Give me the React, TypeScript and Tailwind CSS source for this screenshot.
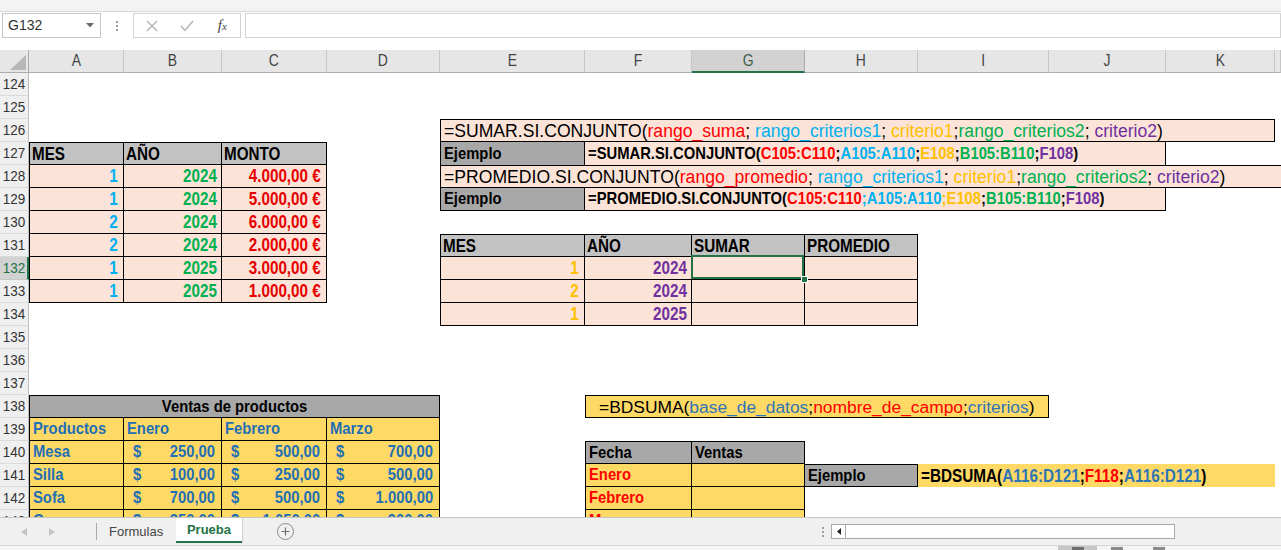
import React from "react";

const GRID =
  "grid grid-cols-[29px_95px_98px_105px_113px_145px_107px_113px_113px_131px_117px_109px_1fr]";
const ARIAL = "font-['Liberation_Sans',Arial,sans-serif]";

const K = "text-black";
const R = "text-[#ff0000]";
const CY = "text-[#00b0f0]";
const Y = "text-[#ffc000]";
const G = "text-[#00b050]";
const P = "text-[#7030a0]";
const B = "text-[#2e75b6]";

type Seg = [string, string];

function Segs({ segs }: { segs: Seg[] }) {
  return (
    <>
      {segs.map(([t, c], i) => (
        <span key={i} className={c}>
          {t}
        </span>
      ))}
    </>
  );
}

/* narrow text: Arial glyphs squeezed like Arial Narrow / Calibri */
function N({ o = "l", children }: { o?: "l" | "r" | "c"; children?: React.ReactNode }) {
  const cls = o === "r" ? "origin-right" : o === "c" ? "origin-center" : "origin-left";
  return <span className={`inline-block scale-x-[0.87] ${cls}`}>{children}</span>;
}

function Cell({
  p,
  cls,
  children,
}: {
  p: string;
  cls?: string;
  children?: React.ReactNode;
}) {
  return (
    <div
      className={`row-start-1 ${p} flex items-center whitespace-nowrap min-w-0 ${cls ?? ""}`}
    >
      {children}
    </div>
  );
}

function RowHead({ n, sel }: { n: number; sel?: boolean }) {
  return sel ? (
    <div className="row-start-1 col-start-1 flex items-center justify-center bg-[#d2d2d2] text-[#217346] border-b border-b-[#c8c8c8] border-r-2 border-r-[#217346] text-[15.5px] font-normal">
      <N o="c">{n}</N>
    </div>
  ) : (
    <div className="row-start-1 col-start-1 flex items-center justify-center bg-[#efefef] text-[#333] border-b border-b-[#dadada] border-r border-r-[#bdbdbd] text-[15.5px] font-normal">
      <N o="c">{n}</N>
    </div>
  );
}

function Row({
  n,
  sel,
  children,
}: {
  n: number;
  sel?: boolean;
  children?: React.ReactNode;
}) {
  return (
    <div className={`${GRID} h-[23px] shrink-0`}>
      <RowHead n={n} sel={sel} />
      {children}
    </div>
  );
}

function Money({ v }: { v: string }) {
  return (
    <div className="flex w-full justify-between pl-[9px] pr-[6px]">
      <N>$</N>
      <N o="r">{v}</N>
    </div>
  );
}

const PEACH = "bg-[#fbe4d7]";
const GOLD = "bg-[#ffd966]";
const HGRAY = "bg-[#c2c2c2]";
const DGRAY = "bg-[#a8a8a8]";

function T1Row({ n, m, a, v, sel, children }: { n: number; m: string; a: string; v: string; sel?: boolean; children?: React.ReactNode }) {
  return (
    <Row n={n} sel={sel}>
      <Cell p="col-start-2" cls={`${PEACH} border-l border-r border-b border-black justify-end pr-[5px] font-bold text-[17.5px] ${CY}`}>
        <N o="r">{m}</N>
      </Cell>
      <Cell p="col-start-3" cls={`${PEACH} border-r border-b border-black justify-end pr-[4px] font-bold text-[17.5px] ${G}`}>
        <N o="r">{a}</N>
      </Cell>
      <Cell p="col-start-4" cls={`${PEACH} border-r border-b border-black justify-end pr-[5px] font-bold text-[17.5px] text-[#e60000]`}>
        <N o="r">{v}</N>
      </Cell>
      {children}
    </Row>
  );
}

function T2Cells({ m, a, sel }: { m: string; a: string; sel?: boolean }) {
  return (
    <>
      <Cell p="col-start-6" cls={`${PEACH} border-l border-r border-b border-black justify-end pr-[5px] font-bold text-[17.5px] ${Y}`}>
        <N o="r">{m}</N>
      </Cell>
      <Cell p="col-start-7" cls={`${PEACH} border-r border-b border-black justify-end pr-[4px] font-bold text-[17.5px] ${P}`}>
        <N o="r">{a}</N>
      </Cell>
      <Cell p="col-start-8" cls={`${PEACH} border-r border-b border-black relative`}>
        {sel && (
          <>
            <div className="absolute z-10 left-[-1px] top-[-2px] w-[calc(100%+1px)] h-[calc(100%+2px)] border-2 border-[#217346]" />
            <div className="absolute z-10 right-[-4px] bottom-[-4px] w-[7px] h-[7px] bg-[#217346] border border-white" />
          </>
        )}
      </Cell>
      <Cell p="col-start-9" cls={`${PEACH} border-r border-b border-black`} />
    </>
  );
}

const VB = "text-[#1f6fb5]";

function VRow({ n, name, e, f, m, children }: { n: number; name: string; e: string; f: string; m: string; children?: React.ReactNode }) {
  return (
    <Row n={n}>
      <Cell p="col-start-2" cls={`${GOLD} border-l border-r border-b border-black font-bold ${VB} pl-[3px]`}>
        <N>{name}</N>
      </Cell>
      <Cell p="col-start-3" cls={`${GOLD} border-r border-b border-black font-bold ${VB}`}>
        <Money v={e} />
      </Cell>
      <Cell p="col-start-4" cls={`${GOLD} border-r border-b border-black font-bold ${VB}`}>
        <Money v={f} />
      </Cell>
      <Cell p="col-start-5" cls={`${GOLD} border-r border-b border-black font-bold ${VB}`}>
        <Money v={m} />
      </Cell>
      {children}
    </Row>
  );
}

function FechaCells({ label }: { label: string }) {
  return (
    <>
      <Cell p="col-start-7" cls={`${GOLD} border-l border-r border-b border-black font-bold text-[#ff0000] pl-[3px]`}>
        <N>{label}</N>
      </Cell>
      <Cell p="col-start-8" cls={`${GOLD} border-r border-b border-black`} />
    </>
  );
}

function FormulaBar() {
  return (
    <div className="h-[50px] shrink-0 bg-white flex flex-col">
      <div className="h-[12px] bg-[#f3f3f3] border-b border-[#d9d9d9]" />
      <div className={`flex items-start pt-[1px] ${ARIAL}`}>
        <div className="ml-[2px] w-[99px] h-[25px] border border-[#c6c6c6] bg-white flex items-center justify-between pl-[5px] pr-[6px] text-[14px] text-[#333]">
          <span>G132</span>
          <svg width="8" height="5" viewBox="0 0 8 5">
            <polygon points="0,0 8,0 4,4.5" fill="#6b6b6b" />
          </svg>
        </div>
        <div className="w-[32px] h-[25px] flex flex-col items-center justify-center gap-[2px]">
          <span className="w-[2px] h-[2px] bg-[#9a9a9a]" />
          <span className="w-[2px] h-[2px] bg-[#9a9a9a]" />
          <span className="w-[2px] h-[2px] bg-[#9a9a9a]" />
        </div>
        <div className="w-[108px] h-[25px] border border-[#d4d4d4] bg-white flex items-center">
          <div className="w-[36px] flex justify-center">
            <svg width="12" height="12" viewBox="0 0 12 12">
              <path d="M1 1 L11 11 M11 1 L1 11" stroke="#b3b3b3" strokeWidth="1.3" />
            </svg>
          </div>
          <div className="w-[36px] flex justify-center">
            <svg width="14" height="12" viewBox="0 0 14 12">
              <path d="M1 6 L5 10.5 L13 1" stroke="#b3b3b3" strokeWidth="1.4" fill="none" />
            </svg>
          </div>
          <div className="w-[36px] flex justify-center font-['Liberation_Serif',serif] italic text-[15px] text-[#444]">
            <span>
              f<span className="text-[11px]">x</span>
            </span>
          </div>
        </div>
        <div className="ml-[4px] flex-1 h-[25px] border border-[#d4d4d4] bg-white" />
      </div>
    </div>
  );
}

function ColHeader() {
  const letters: [string, string][] = [
    ["A", "col-start-2"],
    ["B", "col-start-3"],
    ["C", "col-start-4"],
    ["D", "col-start-5"],
    ["E", "col-start-6"],
    ["F", "col-start-7"],
    ["G", "col-start-8"],
    ["H", "col-start-9"],
    ["I", "col-start-10"],
    ["J", "col-start-11"],
    ["K", "col-start-12"],
    ["", "col-start-13"],
  ];
  return (
    <div className={`${GRID} h-[23px] shrink-0 bg-[#e6e6e6] ${ARIAL} text-[16px] leading-[20px]`}>
      <div className="row-start-1 col-start-1 border-r border-b border-[#ababab] relative">
        <svg className="absolute left-0 top-0" width="29" height="23" viewBox="0 0 29 23">
          <polygon points="10,20 26,20 26,5" fill="#b7b7b7" />
        </svg>
      </div>
      {letters.map(([l, p]) =>
        l === "G" ? (
          <div key={l} className={`row-start-1 ${p} flex items-center justify-center bg-[#d2d2d2] text-[#3d5c4a] border-r border-r-[#ababab] border-b-2 border-b-[#217346]`}>
            <N o="c">{l}</N>
          </div>
        ) : (
          <div key={l + p} className={`row-start-1 ${p} flex items-center justify-center text-[#444] border-r border-r-[#c6c6c6] border-b border-b-[#ababab]`}>
            <N o="c">{l}</N>
          </div>
        )
      )}
    </div>
  );
}

const FORM = "font-normal text-[17.6px] pl-[3px]";

function Sheet() {
  return (
    <div className={`h-[444px] shrink-0 overflow-hidden bg-white flex flex-col ${ARIAL} text-[17px] leading-[20px] text-black`}>
      <Row n={124} />
      <Row n={125} />
      <Row n={126}>
        <Cell p="col-start-6 col-span-7" cls={`${PEACH} border border-black ${FORM}`}>
          <span>
            <Segs
              segs={[
                ["=SUMAR.SI.CONJUNTO(", K],
                ["rango_suma", R],
                ["; ", K],
                ["rango_criterios1", CY],
                ["; ", K],
                ["criterio1", Y],
                [";", K],
                ["rango_criterios2", G],
                ["; ", K],
                ["criterio2", P],
                [")", K],
              ]}
            />
          </span>
        </Cell>
      </Row>
      <Row n={127}>
        <Cell p="col-start-2" cls={`${HGRAY} border-t border-l border-r border-b border-black font-bold text-[17.5px] pl-[2px]`}>
          <N>MES</N>
        </Cell>
        <Cell p="col-start-3" cls={`${HGRAY} border-t border-r border-b border-black font-bold text-[17.5px] pl-[2px]`}>
          <N>AÑO</N>
        </Cell>
        <Cell p="col-start-4" cls={`${HGRAY} border-t border-r border-b border-black font-bold text-[17.5px] pl-[2px]`}>
          <N>MONTO</N>
        </Cell>
        <Cell p="col-start-6" cls={`${DGRAY} border-l border-r border-black font-bold pl-[3px]`}>
          <N>Ejemplo</N>
        </Cell>
        <Cell p="col-start-7 col-span-5" cls={`${PEACH} border-r border-black font-bold pl-[3px]`}>
          <N>
            <Segs
              segs={[
                ["=SUMAR.SI.CONJUNTO(", K],
                ["C105:C110", R],
                [";", K],
                ["A105:A110", CY],
                [";", K],
                ["E108", Y],
                [";", K],
                ["B105:B110", G],
                [";", K],
                ["F108", P],
                [")", K],
              ]}
            />
          </N>
        </Cell>
      </Row>
      <T1Row n={128} m="1" a="2024" v="4.000,00 €">
        <Cell p="col-start-6 col-span-8" cls={`${PEACH} border-t border-l border-b border-black ${FORM}`}>
          <span>
            <Segs
              segs={[
                ["=PROMEDIO.SI.CONJUNTO(", K],
                ["rango_promedio", R],
                ["; ", K],
                ["rango_criterios1", CY],
                ["; ", K],
                ["criterio1", Y],
                [";", K],
                ["rango_criterios2", G],
                ["; ", K],
                ["criterio2", P],
                [")", K],
              ]}
            />
          </span>
        </Cell>
      </T1Row>
      <T1Row n={129} m="1" a="2024" v="5.000,00 €">
        <Cell p="col-start-6" cls={`${DGRAY} border-l border-r border-b border-black font-bold pl-[3px]`}>
          <N>Ejemplo</N>
        </Cell>
        <Cell p="col-start-7 col-span-5" cls={`${PEACH} border-r border-b border-black font-bold pl-[3px]`}>
          <N>
            <Segs
              segs={[
                ["=PROMEDIO.SI.CONJUNTO(", K],
                ["C105:C110", R],
                [";A105:A110", CY],
                [";E108", Y],
                [";", K],
                ["B105:B110", G],
                [";", K],
                ["F108", P],
                [")", K],
              ]}
            />
          </N>
        </Cell>
      </T1Row>
      <T1Row n={130} m="2" a="2024" v="6.000,00 €" />
      <T1Row n={131} m="2" a="2024" v="2.000,00 €">
        <Cell p="col-start-6" cls={`${HGRAY} border-t border-l border-r border-b border-black font-bold text-[17.5px] pl-[2px]`}>
          <N>MES</N>
        </Cell>
        <Cell p="col-start-7" cls={`${HGRAY} border-t border-r border-b border-black font-bold text-[17.5px] pl-[2px]`}>
          <N>AÑO</N>
        </Cell>
        <Cell p="col-start-8" cls={`${HGRAY} border-t border-r border-b border-black font-bold text-[17.5px] pl-[2px]`}>
          <N>SUMAR</N>
        </Cell>
        <Cell p="col-start-9" cls={`${HGRAY} border-t border-r border-b border-black font-bold text-[17.5px] pl-[2px]`}>
          <N>PROMEDIO</N>
        </Cell>
      </T1Row>
      <T1Row n={132} sel m="1" a="2025" v="3.000,00 €">
        <T2Cells m="1" a="2024" sel />
      </T1Row>
      <T1Row n={133} m="1" a="2025" v="1.000,00 €">
        <T2Cells m="2" a="2024" />
      </T1Row>
      <Row n={134}>
        <T2Cells m="1" a="2025" />
      </Row>
      <Row n={135} />
      <Row n={136} />
      <Row n={137} />
      <Row n={138}>
        <Cell p="col-start-2 col-span-4" cls={`${DGRAY} border border-black font-bold justify-center`}>
          <N o="c">Ventas de productos</N>
        </Cell>
        <Cell p="col-start-7 col-span-4" cls={`${GOLD} border border-black font-normal text-[17.4px] pl-[13px]`}>
          <span>
            <Segs
              segs={[
                ["=BDSUMA(", K],
                ["base_de_datos", B],
                [";", K],
                ["nombre_de_campo", R],
                [";", K],
                ["criterios", B],
                [")", K],
              ]}
            />
          </span>
        </Cell>
      </Row>
      <Row n={139}>
        {[
          ["Productos", "col-start-2", "border-l"],
          ["Enero", "col-start-3", ""],
          ["Febrero", "col-start-4", ""],
          ["Marzo", "col-start-5", ""],
        ].map(([t, p, l]) => (
          <Cell key={t} p={p} cls={`${GOLD} ${l} border-r border-b border-black font-bold ${VB} pl-[3px]`}>
            <N>{t}</N>
          </Cell>
        ))}
      </Row>
      <VRow n={140} name="Mesa" e="250,00" f="500,00" m="700,00">
        <Cell p="col-start-7" cls={`${DGRAY} border-t border-l border-r border-b border-black font-bold pl-[3px]`}>
          <N>Fecha</N>
        </Cell>
        <Cell p="col-start-8" cls={`${DGRAY} border-t border-r border-b border-black font-bold pl-[3px]`}>
          <N>Ventas</N>
        </Cell>
      </VRow>
      <VRow n={141} name="Silla" e="100,00" f="250,00" m="500,00">
        <FechaCells label="Enero" />
        <Cell p="col-start-9" cls={`${DGRAY} border-t border-r border-b border-black font-bold pl-[3px]`}>
          <N>Ejemplo</N>
        </Cell>
        <Cell p="col-start-10 col-span-3" cls={`${GOLD} font-bold text-[17.6px] pl-[3px]`}>
          <N>
            <Segs
              segs={[
                ["=BDSUMA(", K],
                ["A116:D121", B],
                [";", K],
                ["F118", R],
                [";", K],
                ["A116:D121", B],
                [")", K],
              ]}
            />
          </N>
        </Cell>
      </VRow>
      <VRow n={142} name="Sofa" e="700,00" f="500,00" m="1.000,00">
        <FechaCells label="Febrero" />
      </VRow>
      <VRow n={143} name="Cama" e="350,00" f="1.050,00" m="900,00">
        <FechaCells label="Marzo" />
      </VRow>
    </div>
  );
}

function TabBar() {
  return (
    <div className={`h-[28px] shrink-0 bg-[#f0f0f0] border-t border-[#c6c6c6] flex items-stretch ${ARIAL}`}>
      <div className="w-[96px] flex items-center">
        <svg className="ml-[21px]" width="6" height="8" viewBox="0 0 6 8">
          <polygon points="6,0 6,8 0,4" fill="#c4c4c4" />
        </svg>
        <svg className="ml-[22px]" width="6" height="8" viewBox="0 0 6 8">
          <polygon points="0,0 0,8 6,4" fill="#c4c4c4" />
        </svg>
      </div>
      <div className="w-px my-[5px] bg-[#a9a9a9]" />
      <div className="w-[79px] flex items-center pl-[12px] text-[13px] leading-[16px] text-[#444]">Formulas</div>
      <div className="w-[66px] mb-[2px] bg-white border-b-2 border-[#217346] flex items-center justify-center text-[13px] leading-[16px] font-bold text-[#217346] shadow-[1px_0_0_#d0d0d0]">
        Prueba
      </div>
      <div className="w-[86px] flex items-center justify-center">
        <div className="w-[17px] h-[17px] rounded-full border border-[#8a8a8a] flex items-center justify-center">
          <svg width="9" height="9" viewBox="0 0 9 9">
            <path d="M4.5 0.5 V8.5 M0.5 4.5 H8.5" stroke="#6f6f6f" strokeWidth="1.2" />
          </svg>
        </div>
      </div>
      <div className="flex-1" />
      <div className="w-[16px] flex flex-col items-center justify-center gap-[2px]">
        <span className="w-[2px] h-[2px] bg-[#a0a0a0]" />
        <span className="w-[2px] h-[2px] bg-[#a0a0a0]" />
        <span className="w-[2px] h-[2px] bg-[#a0a0a0]" />
      </div>
      <div className="w-[344px] my-[6px] border border-[#a8a8a8] bg-white flex">
        <div className="w-[14px] border-r border-[#a8a8a8] flex items-center justify-center">
          <svg width="4" height="7" viewBox="0 0 4 7">
            <polygon points="4,0 4,7 0,3.5" fill="#222" />
          </svg>
        </div>
      </div>
      <div className="w-[106px]" />
    </div>
  );
}

function StatusBar() {
  return (
    <div className="h-[5px] shrink-0 bg-[#f3f3f3] border-t border-[#d6d6d6] flex">
      <div className="w-[1058px]" />
      <div className="w-[39px] bg-[#c6c6c6] flex justify-center">
        <div className="w-[12px] h-[3px] bg-[#707070] mt-[1px]" />
      </div>
      <div className="w-[14px]" />
      <div className="w-[12px] h-[3px] bg-[#8a8a8a] mt-[1px]" />
      <div className="w-[30px]" />
      <div className="w-[12px] h-[3px] bg-[#8a8a8a] mt-[1px]" />
    </div>
  );
}

export default function App() {
  return (
    <div className="w-[1281px] h-[550px] overflow-hidden flex flex-col bg-white">
      <FormulaBar />
      <ColHeader />
      <Sheet />
      <TabBar />
      <StatusBar />
    </div>
  );
}
